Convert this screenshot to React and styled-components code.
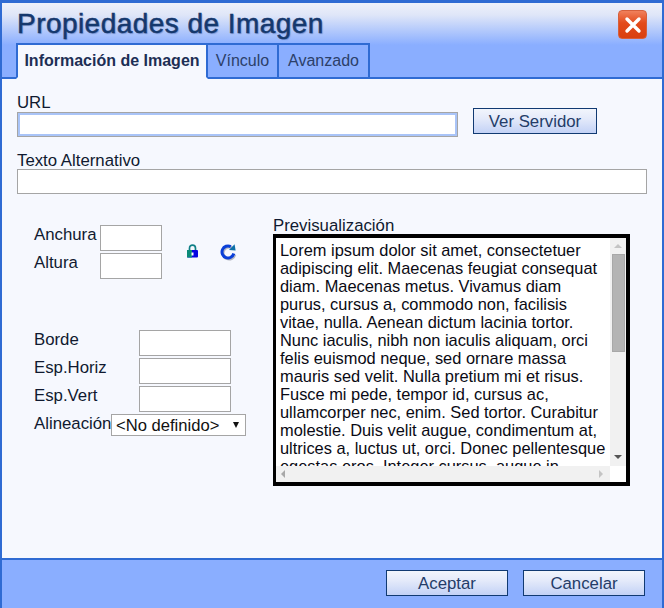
import React from 'react'
import styled, { createGlobalStyle } from 'styled-components'

const lorem = `Lorem ipsum dolor sit amet, consectetuer adipiscing elit. Maecenas feugiat consequat diam. Maecenas metus. Vivamus diam purus, cursus a, commodo non, facilisis vitae, nulla. Aenean dictum lacinia tortor. Nunc iaculis, nibh non iaculis aliquam, orci felis euismod neque, sed ornare massa mauris sed velit. Nulla pretium mi et risus. Fusce mi pede, tempor id, cursus ac, ullamcorper nec, enim. Sed tortor. Curabitur molestie. Duis velit augue, condimentum at, ultrices a, luctus ut, orci. Donec pellentesque egestas eros. Integer cursus, augue in cursus faucibus, eros pede bibendum sem, in tempus tellus justo quis ligula. Etiam eget tortor. Vestibulum rutrum, est ut placerat elementum, lectus nisl aliquam velit, tempor aliquam eros nunc nonummy metus.`

function App() {
	return (
		<>
			<GlobalStyle />
			<Dialog>
				<Header>
					<TitleRow>
						<Title>Propiedades de Imagen</Title>
						<CloseButton aria-label="Cerrar">
							<svg width="18" height="18" viewBox="0 0 18 18">
								<path d="M3 3 L15 15 M15 3 L3 15" stroke="#fff" strokeWidth="3.4" strokeLinecap="round" fill="none" />
							</svg>
						</CloseButton>
					</TitleRow>
					<Tabs>
						<Tab $active>Información de Imagen</Tab>
						<Tab $width={71}>Vínculo</Tab>
						<Tab $width={91}>Avanzado</Tab>
					</Tabs>
				</Header>

				<Body>
					<UrlRow>
						<div>
							<Label>URL</Label>
							<UrlInput type="text" />
						</div>
						<ServerButton>Ver Servidor</ServerButton>
					</UrlRow>

					<AltLabel>Texto Alternativo</AltLabel>
					<TextInput type="text" />

					<Columns>
						<LeftColumn>
							<SizeBlock>
								<SizeFields>
									<SizeRow>
										<FieldLabel>Anchura</FieldLabel>
										<SmallInput type="text" $width={62} />
									</SizeRow>
									<SizeRow>
										<FieldLabel>Altura</FieldLabel>
										<SmallInput type="text" $width={62} />
									</SizeRow>
								</SizeFields>
								<LockIcon />
								<ResetIcon />
							</SizeBlock>

							<SpacingBlock>
								<SpacingRow>
									<FieldLabel>Borde</FieldLabel>
									<SmallInput type="text" $width={92} />
								</SpacingRow>
								<SpacingRow>
									<FieldLabel>Esp.Horiz</FieldLabel>
									<SmallInput type="text" $width={92} />
								</SpacingRow>
								<SpacingRow>
									<FieldLabel>Esp.Vert</FieldLabel>
									<SmallInput type="text" $width={92} />
								</SpacingRow>
								<AlignRow>
									<FieldLabel>Alineación</FieldLabel>
									<SelectWrap>
										<Select defaultValue="">
											<option value="">&lt;No definido&gt;</option>
											<option value="left">Izquierda</option>
											<option value="right">Derecha</option>
										</Select>
									</SelectWrap>
								</AlignRow>
							</SpacingBlock>
						</LeftColumn>

						<PreviewColumn>
							<PreviewLabel>Previsualización</PreviewLabel>
							<PreviewBox>
								<PreviewText>{lorem}</PreviewText>
								<VerticalBar>
									<Arrow $dir="up" />
									<Thumb />
									<Arrow $dir="down" />
								</VerticalBar>
								<HorizontalBar>
									<Arrow $dir="left" />
									<Arrow $dir="right" />
								</HorizontalBar>
								<BarCorner />
							</PreviewBox>
						</PreviewColumn>
					</Columns>
				</Body>

				<Footer>
					<ActionButton>Aceptar</ActionButton>
					<ActionButton>Cancelar</ActionButton>
				</Footer>
			</Dialog>
		</>
	)
}

function LockIcon() {
	return (
		<LockSvg width="13" height="14" viewBox="0 0 13 14">
			<path d="M3.5 6.5 V4.2 C3.5 2.3 4.8 1.2 6.5 1.2 C8.2 1.2 9.5 2.3 9.5 4.2 V6.5" fill="none" stroke="#0f7f86" strokeWidth="1.7" />
			<rect x="1" y="6" width="11" height="7.5" rx="1" fill="#0505e0" />
			<rect x="1" y="6" width="5" height="7.5" fill="#0b8a78" />
			<rect x="5.5" y="8.5" width="2" height="3" fill="#fff" />
		</LockSvg>
	)
}

function ResetIcon() {
	return (
		<ResetSvg width="18" height="18" viewBox="0 0 18 18">
			<path d="M14.8 10.5 A6 6 0 1 1 11.8 3.6" fill="none" stroke="#b4b7c0" strokeWidth="3" transform="translate(1 1.1)" />
			<path d="M14.8 10.5 A6 6 0 1 1 11.8 3.6" fill="none" stroke="#0a3fd8" strokeWidth="3" />
			<path d="M10 7 L16.6 7.4 L15.6 1.2 Z" fill="#0d6fa8" />
		</ResetSvg>
	)
}

export default App

const GlobalStyle = createGlobalStyle`
	html, body {
		margin: 0;
		padding: 0;
		background: #8aaeff;
	}
	body {
		font-family: "Liberation Sans", Arial, sans-serif;
		font-size: 16.8px;
	}
`

const Dialog = styled.div`
	width: 664px;
	height: 608px;
	box-sizing: border-box;
	display: flex;
	flex-direction: column;
	background: #8aaeff;
	border-left: 2px solid #2f6bd3;
	border-right: 2px solid #2f6bd3;
	border-top: 3px solid #2f6bd3;
`

const Header = styled.header`
	height: 76px;
	box-sizing: border-box;
	display: flex;
	flex-direction: column;
	background: linear-gradient(#eef1fa 0, #dfe6f8 12px, #8aaeff 42px, #8aaeff 100%);
	border-bottom: 2px solid #2f6bd3;
	padding-left: 14px;
`

const TitleRow = styled.div`
	height: 40px;
	display: flex;
	align-items: flex-start;
	justify-content: space-between;
`

const Title = styled.h1`
	margin: 3px 0 0 1px;
	font-size: 28px;
	line-height: 36px;
	font-weight: 400;
	color: #15386d;
	-webkit-text-stroke: 0.5px #15386d;
	text-shadow: 1px 1px 1px rgba(60, 90, 160, 0.45);
	letter-spacing: 0.45px;
`

const CloseButton = styled.button`
	width: 29px;
	height: 29px;
	margin: 7px 15px 0 0;
	padding: 0;
	display: flex;
	align-items: center;
	justify-content: center;
	border: 1px solid #d6603c;
	border-radius: 4px;
	background: linear-gradient(#f0805c, #e34a1a 45%, #d9400f);
`

const Tabs = styled.div`
	display: flex;
	height: 36px;
	margin-bottom: -2px;
`

const Tab = styled.div`
	width: ${p => (p.$active ? '192px' : `${p.$width}px`)};
	box-sizing: border-box;
	display: flex;
	align-items: center;
	justify-content: center;
	padding-bottom: 1px;
	border: 2px solid #2f6bd3;
	border-left-width: ${p => (p.$active ? '2px' : '0')};
	border-bottom-color: ${p => (p.$active ? '#f6f8fe' : '#2f6bd3')};
	background: ${p => (p.$active ? '#f6f8fe' : '#8aaeff')};
	color: ${p => (p.$active ? '#1d2f55' : '#2c4069')};
	font-weight: ${p => (p.$active ? 700 : 400)};
	font-size: 16px;
`

const Body = styled.main`
	flex: 1;
	background: #f6f8fe;
	padding: 16px 15px 0;
	border-bottom: 2px solid #2f6bd3;
`

const Label = styled.div`
	line-height: 15px;
	margin-bottom: 2px;
	color: #101a30;
`

const AltLabel = styled(Label)`
	margin-top: 16px;
	margin-bottom: 1px;
`

const UrlRow = styled.div`
	display: flex;
	align-items: flex-start;
	gap: 15px;
`

const TextInput = styled.input`
	display: block;
	width: 630px;
	height: 25px;
	box-sizing: border-box;
	border: 1px solid #a5a5a5;
	background: #fff;
	outline: none;
	margin: 0;
`

const UrlInput = styled(TextInput)`
	width: 441px;
	box-shadow: inset 0 0 0 2px #a9c4f8;
`

const ActionButton = styled.button`
	width: 122px;
	height: 26px;
	box-sizing: border-box;
	padding: 1px 0 0;
	border: 1.5px solid #113a72;
	background: linear-gradient(#f2f5fc, #e4eafa 40%, #c3d2f6);
	color: #243c68;
	font-family: "Liberation Sans", Arial, sans-serif;
	font-size: 16.8px;
`

const ServerButton = styled(ActionButton)`
	width: 124px;
	margin-top: 13px;
`

const Columns = styled.div`
	display: flex;
	margin-top: 23px;
`

const LeftColumn = styled.div`
	width: 256px;
	padding: 8px 0 0 17px;
	box-sizing: border-box;
`

const SizeBlock = styled.div`
	display: flex;
	align-items: flex-start;
`

const SizeFields = styled.div`
	width: 153px;
	display: flex;
	flex-direction: column;
	gap: 2px;
`

const SizeRow = styled.div`
	display: grid;
	grid-template-columns: 66px auto;
	width: 128px;
`

const FieldLabel = styled.span`
	color: #101a30;
	line-height: 18px;
	margin-top: 1px;
	white-space: nowrap;
`

const SmallInput = styled.input`
	width: ${p => p.$width}px;
	height: 26px;
	box-sizing: border-box;
	border: 1px solid #a5a5a5;
	background: #fff;
	outline: none;
	margin: 0;
`

const LockSvg = styled.svg`
	margin: 19px 0 0 -1px;
	flex: none;
`

const ResetSvg = styled.svg`
	margin: 18px 0 0 20px;
	flex: none;
`

const SpacingBlock = styled.div`
	margin-top: 51px;
	display: flex;
	flex-direction: column;
	gap: 2px;
`

const SpacingRow = styled.div`
	display: grid;
	grid-template-columns: 105px auto;
`

const AlignRow = styled.div`
	display: grid;
	grid-template-columns: 77px 135px;
`

const SelectWrap = styled.div`
	position: relative;
	&::after {
		content: '';
		position: absolute;
		right: 7px;
		top: 8px;
		border-left: 3px solid transparent;
		border-right: 3px solid transparent;
		border-top: 6px solid #111;
		pointer-events: none;
	}
`

const Select = styled.select`
	appearance: none;
	display: block;
	width: 135px;
	height: 22px;
	box-sizing: border-box;
	padding: 0 0 0 4px;
	border: 1px solid #a5a5a5;
	border-radius: 0;
	background: #fff;
	color: #111;
	font-family: "Liberation Sans", Arial, sans-serif;
	font-size: 16.6px;
	outline: none;
`

const PreviewColumn = styled.div`
	width: 357px;
`

const PreviewLabel = styled.div`
	line-height: 15px;
	color: #101a30;
	margin: 1px 0 1px;
`

const PreviewBox = styled.div`
	width: 357px;
	height: 252px;
	box-sizing: border-box;
	border-style: solid;
	border-color: #000;
	border-width: 4px 4px 4px 3px;
	background: #fff;
	display: grid;
	grid-template-columns: 334px 16px;
	grid-template-rows: 228px 16px;
`

const PreviewText = styled.div`
	overflow: hidden;
	padding: 3px 0 0 4px;
	font-size: 16.4px;
	line-height: 18px;
	color: #0a0a14;
`

const VerticalBar = styled.div`
	background: #f1f1f1;
	display: flex;
	flex-direction: column;
	align-items: center;
	justify-content: space-between;
	padding: 6px 0 7px;
`

const HorizontalBar = styled.div`
	background: #f1f1f1;
	display: flex;
	align-items: center;
	justify-content: space-between;
	padding: 0 7px 0 5px;
`

const BarCorner = styled.div`
	background: #fff;
`

const Thumb = styled.div`
	width: 13px;
	height: 98px;
	box-sizing: border-box;
	background: #b4b4b4;
	border: 1px solid #a8a8a8;
	margin: 0 0 auto;
	position: relative;
	top: 6px;
	left: 0.5px;
`

const arrowShape = {
	up: 'border-left: 4px solid transparent; border-right: 4px solid transparent; border-bottom: 4px solid #c4c4c4;',
	down: 'border-left: 4px solid transparent; border-right: 4px solid transparent; border-top: 4px solid #555;',
	left: 'border-top: 4px solid transparent; border-bottom: 4px solid transparent; border-right: 4px solid #a8a8a8;',
	right: 'border-top: 4px solid transparent; border-bottom: 4px solid transparent; border-left: 4px solid #c4c4c4;',
}

const Arrow = styled.span`
	width: 0;
	height: 0;
	${p => arrowShape[p.$dir]}
`

const Footer = styled.footer`
	height: 48px;
	display: flex;
	justify-content: flex-end;
	align-items: flex-start;
	gap: 15px;
	padding: 10px 17px 0 0;
	box-sizing: border-box;
`
